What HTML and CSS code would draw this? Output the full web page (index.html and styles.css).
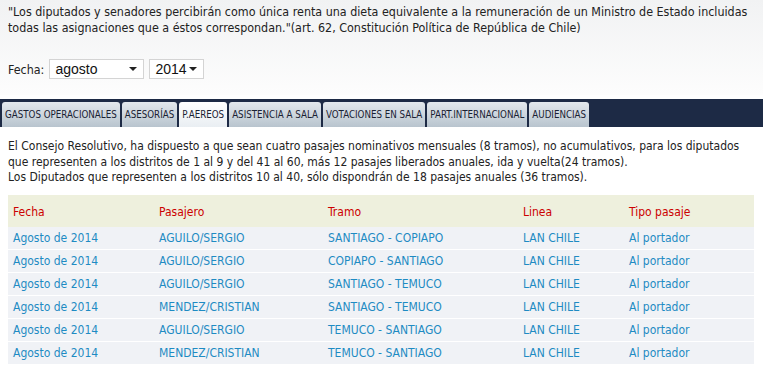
FILE: index.html
```html
<!DOCTYPE html>
<html lang="es">
<head>
<meta charset="utf-8">
<title>Pasajes aéreos</title>
<link rel="stylesheet" href="styles.css">
</head>
<body>
<div class="top">
  <p class="quote">"Los diputados y senadores percibirán como única renta una dieta equivalente a la remuneración de un Ministro de Estado incluidas todas las asignaciones que a éstos correspondan."(art. 62, Constitución Política de República de Chile)</p>
  <div class="fecha">
    <span class="label">Fecha:</span>
    <div class="sel sel-mes"><span>agosto</span><i class="arrow"></i></div>
    <div class="sel sel-anio"><span>2014</span><i class="arrow"></i></div>
  </div>
</div>
<nav class="tabs">
  <a class="tab">GASTOS OPERACIONALES</a>
  <a class="tab">ASESORÍAS</a>
  <a class="tab active">P.AEREOS</a>
  <a class="tab">ASISTENCIA A SALA</a>
  <a class="tab">VOTACIONES EN SALA</a>
  <a class="tab">PART.INTERNACIONAL</a>
  <a class="tab">AUDIENCIAS</a>
</nav>
<p class="info">El Consejo Resolutivo, ha dispuesto a que sean cuatro pasajes nominativos mensuales (8 tramos), no acumulativos, para los diputados que representen a los distritos de 1 al 9 y del 41 al 60, más 12 pasajes liberados anuales, ida y vuelta(24 tramos).<br>Los Diputados que representen a los distritos 10 al 40, sólo dispondrán de 18 pasajes anuales (36 tramos).</p>
<table class="grid">
  <colgroup><col class="c1"><col class="c2"><col class="c3"><col class="c4"><col class="c5"></colgroup>
  <thead>
    <tr><th>Fecha</th><th>Pasajero</th><th>Tramo</th><th>Linea</th><th>Tipo pasaje</th></tr>
  </thead>
  <tbody>
    <tr><td>Agosto de 2014</td><td>AGUILO/SERGIO</td><td>SANTIAGO - COPIAPO</td><td>LAN CHILE</td><td>Al portador</td></tr>
    <tr><td>Agosto de 2014</td><td>AGUILO/SERGIO</td><td>COPIAPO - SANTIAGO</td><td>LAN CHILE</td><td>Al portador</td></tr>
    <tr><td>Agosto de 2014</td><td>AGUILO/SERGIO</td><td>SANTIAGO - TEMUCO</td><td>LAN CHILE</td><td>Al portador</td></tr>
    <tr><td>Agosto de 2014</td><td>MENDEZ/CRISTIAN</td><td>SANTIAGO - TEMUCO</td><td>LAN CHILE</td><td>Al portador</td></tr>
    <tr><td>Agosto de 2014</td><td>AGUILO/SERGIO</td><td>TEMUCO - SANTIAGO</td><td>LAN CHILE</td><td>Al portador</td></tr>
    <tr><td>Agosto de 2014</td><td>MENDEZ/CRISTIAN</td><td>TEMUCO - SANTIAGO</td><td>LAN CHILE</td><td>Al portador</td></tr>
  </tbody>
</table>
</body>
</html>
```
FILE: styles.css
```css
html, body {
  margin: 0;
  padding: 0;
  background: #fff;
}
body {
  font-family: "DejaVu Sans Condensed", "DejaVu Sans", sans-serif;
  font-size: 12px;
  color: #222;
  width: 763px;
  overflow: hidden;
}
.top {
  background: linear-gradient(#f1f2f3, #fdfdfd 95px);
  padding: 4px 8px 0 8px;
  height: 95px;
  box-sizing: border-box;
}
.quote {
  margin: 0;
  font-size: 12.4px;
  line-height: 16px;
}
.fecha {
  display: flex;
  align-items: center;
  margin-top: 23px;
  height: 20px;
}
.label {
  font-size: 12.4px;
  margin-right: 5px;
}
.sel {
  display: flex;
  align-items: center;
  justify-content: space-between;
  height: 20px;
  box-sizing: border-box;
  background: #fff;
  border: 1px solid #d4d4d4;
  padding: 0 6px 0 5px;
  font-family: "Liberation Sans", Arial, sans-serif;
  font-size: 14px;
  color: #111;
}
.sel-mes { width: 95px; }
.sel-anio { width: 55px; margin-left: 5px; }
.arrow {
  width: 0;
  height: 0;
  border-left: 4px solid transparent;
  border-right: 4px solid transparent;
  border-top: 4px solid #222;
}
.tabs {
  display: flex;
  gap: 2px;
  height: 28px;
  box-sizing: border-box;
  padding: 3px 0 0 2px;
  margin-top: 4px;
  background: #1d2a45;
  align-items: stretch;
}
.tab {
  display: flex;
  align-items: center;
  padding: 0 3px;
  font-size: 9.7px;
  color: #1a2233;
  border-radius: 3px 3px 0 0;
  background: linear-gradient(#e3e8ed, #b8c4ce);
}
.tab.active {
  background: linear-gradient(#ffffff, #e9eef2);
}
.info {
  margin: 12px 10px 0 8px;
  line-height: 15.6px;
}
.grid {
  margin: 9px 0 0 8px;
  width: 746px;
  border-collapse: collapse;
  table-layout: fixed;
}
.c1 { width: 146px; }
.c2 { width: 169px; }
.c3 { width: 195px; }
.c4 { width: 106px; }
.c5 { width: 130px; }
.grid th {
  background: #eef0dd;
  color: #cc0000;
  font-weight: normal;
  text-align: left;
  height: 32px;
  padding: 2px 0 0 5px;
  box-sizing: border-box;
}
.grid td {
  background: #f0f2f6;
  color: #1e8bc3;
  height: 23px;
  padding: 0 0 0 5px;
  border-bottom: 1px solid #fff;
  box-sizing: border-box;
}
```
